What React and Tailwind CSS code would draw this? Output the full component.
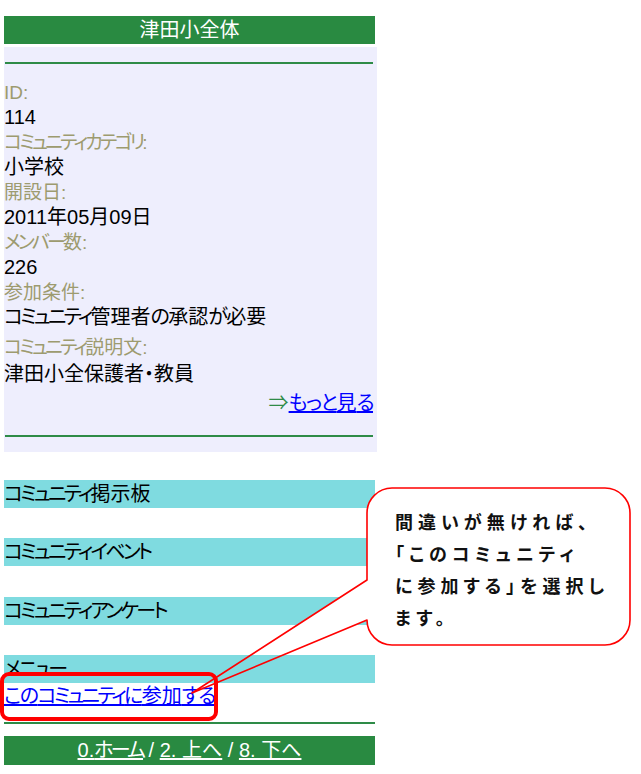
const font =
  "font-['Liberation_Sans','Noto_Sans_CJK_JP',sans-serif] [font-feature-settings:'palt']";

// MS UI Gothic style narrow kana: tighten katakana / hiragana runs
function Narrow({ text }) {
  const parts =
    text.match(/[\u30A1-\u30FA\u30FC-\u30FF]+|[\u3040-\u309F]+|[^\u3040-\u30FA\u30FC-\u30FF]+/g) || [];
  return parts.map((p, i) => {
    if (/[\u30A1-\u30FA\u30FC-\u30FF]/.test(p)) {
      return (
        <span key={i} className="tracking-[-2.8px]">
          {p}
        </span>
      );
    }
    if (/[\u3040-\u309F]/.test(p)) {
      return (
        <span key={i} className="tracking-[-1.5px]">
          {p}
        </span>
      );
    }
    return <span key={i}>{p}</span>;
  });
}

function Label({ text, className = "" }) {
  return (
    <div className={`text-[19px] leading-[25px] text-[#9d9b6f] ${className}`}>
      <Narrow text={text} />
    </div>
  );
}

function Value({ text, className = "" }) {
  return (
    <div className={`text-[20px] leading-[25px] text-black ${className}`}>
      <Narrow text={text} />
    </div>
  );
}

function SectionBar({ title, className = "" }) {
  return (
    <div
      className={`h-[28px] w-[371px] bg-[#7fdbe0] text-[20px] leading-[28px] text-black ${className}`}
    >
      <Narrow text={title} />
    </div>
  );
}

function Callout() {
  return (
    <>
      <svg
        className="pointer-events-none absolute left-0 top-0"
        width="641"
        height="774"
        viewBox="0 0 641 774"
      >
        <path
          d="M392 488 H605 A25 25 0 0 1 630 513 V620 A25 25 0 0 1 605 645 H392 A25 25 0 0 1 367 620 L367 580 V513 A25 25 0 0 1 392 488 Z"
          fill="#ffffff"
        />
        <path d="M368 580 L250 655 L281 655 L368 620 Z" fill="#ffffff" />
        <path
          d="M392 488 H605 A25 25 0 0 1 630 513 V620 A25 25 0 0 1 605 645 H392 A25 25 0 0 1 367 620 L192 693 L367 580 V513 A25 25 0 0 1 392 488 Z"
          fill="none"
          stroke="#ff0000"
          strokeWidth="1.6"
          strokeLinejoin="round"
        />
      </svg>
      <div className="absolute left-[395px] top-[507px] text-[18px] font-bold leading-[32px] tracking-[5px] text-[#111]">
        <div>間違いが無ければ、</div>
        <div>「このコミュニティ</div>
        <div>に参加する」を選択し</div>
        <div>ます。</div>
      </div>
    </>
  );
}

export default function App() {
  return (
    <div className={`relative h-[774px] w-[641px] overflow-hidden bg-white ${font}`}>
      <div className="w-[377px] pl-[4px] pt-[16px]">
        <div className="h-[28px] w-[371px] bg-[#298a41] text-center text-[20px] leading-[28px] text-white">
          津田小全体
        </div>

        <div className="mt-[3px] w-[373px] bg-[#eeeefd] pb-[15px] pt-[15px]">
          <div className="mx-[1px] h-[2px] w-[368px] bg-[#2e8b47]" />
          <div className="mt-[16px]">
            <Label text="ID:" />
            <Value text="114" />
            <Label text="コミュニティカテゴリ:" />
            <Value text="小学校" />
            <Label text="開設日:" />
            <Value text="2011年05月09日" />
            <Label text="メンバー数:" />
            <Value text="226" />
            <Label text="参加条件:" />
            <Value text="コミュニティ管理者の承認が必要" />
            <Label text="コミュニティ説明文:" className="mt-[5px]" />
            <Value text="津田小全保護者・教員" className="pt-[2px]" />
            <div className="mt-[4px] pr-[4px] text-right text-[20px] leading-[25px]">
              <span className="text-[#2e8b47]">⇒</span>
              <a href="#" className="text-[#0000ff] underline">
                <Narrow text="もっと見る" />
              </a>
            </div>
          </div>
          <div className="mx-[1px] mt-[19px] h-[2px] w-[368px] bg-[#2e8b47]" />
        </div>

        <SectionBar title="コミュニティ掲示板" className="mt-[28px]" />
        <SectionBar title="コミュニティイベント" className="mt-[30px]" />
        <SectionBar title="コミュニティアンケート" className="mt-[31px]" />
        <SectionBar title="メニュー" className="mt-[30px]" />

        <div className="mt-[1px] text-[20px] leading-[25px]">
          <a href="#" className="text-[#0000ff] underline">
            <Narrow text="このコミュニティに参加する" />
          </a>
        </div>

        <div className="mt-[13px] h-[2px] w-[371px] bg-[#2e8b47]" />

        <div className="mt-[12px] h-[29px] w-[371px] bg-[#298a41] text-center text-[20px] leading-[29px] text-white">
          <a href="#" className="underline">
            0.<Narrow text="ホーム" />
          </a>
          <span> / </span>
          <a href="#" className="underline">
            2. 上へ
          </a>
          <span> / </span>
          <a href="#" className="underline">
            8. 下へ
          </a>
        </div>
      </div>

      <div className="absolute left-0 top-[672px] h-[49px] w-[218px] rounded-[9px] border-[4px] border-[#ff0000]" />
      <Callout />
    </div>
  );
}
